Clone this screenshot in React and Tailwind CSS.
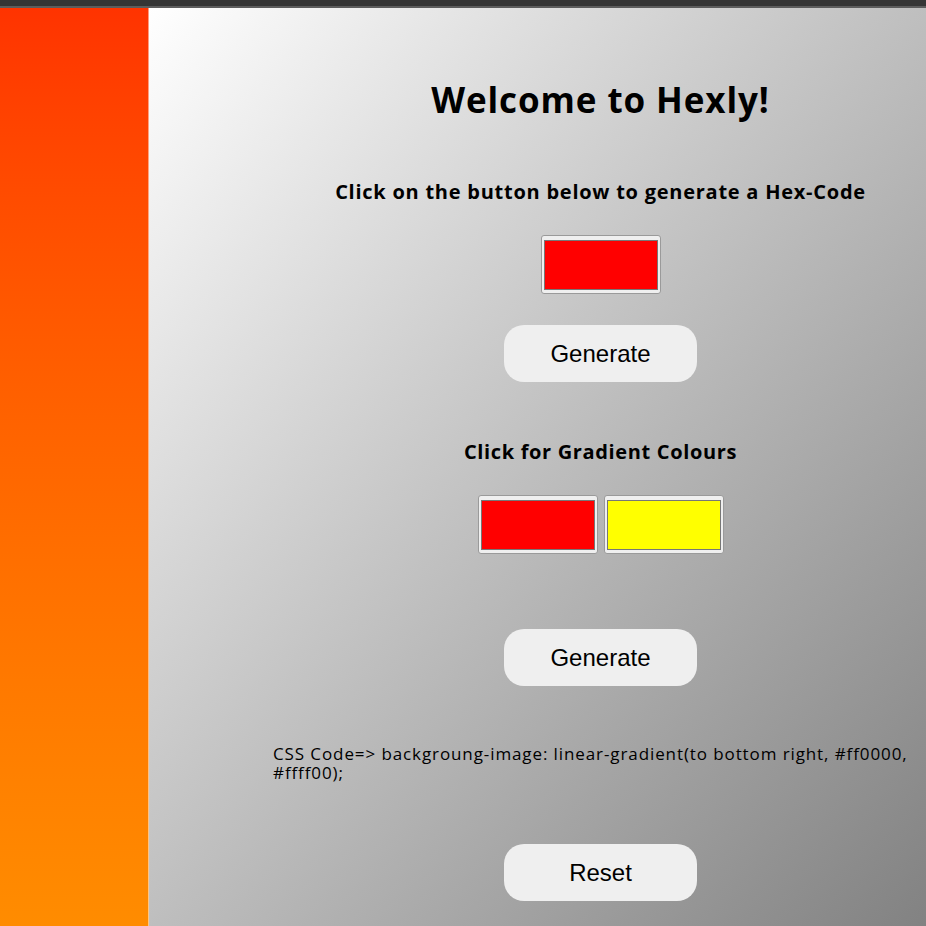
export default function App() {
  const Btn = ({ children }) => (
    <button className="w-[193px] h-[57px] rounded-[20px] bg-[#efefef] text-[24px] text-black font-['Liberation_Sans',Arial,sans-serif]">
      {children}
    </button>
  );
  const Swatch = ({ color }) => (
    <div className="w-[120px] h-[59px] border border-[#9a9a9a] rounded-[3px] bg-[#efefef] pt-[4px] pb-[3px] px-[2px] flex">
      <div className="flex-1 border border-[#777777]" style={{ background: color }} />
    </div>
  );
  return (
    <div className="w-[926px] h-[926px] overflow-hidden flex flex-col">
      <div className="h-[6px] bg-[#353535]" />
      <div className="h-[2px] bg-[#5d5d5d]" />
      <div className="flex flex-1">
        <div className="w-[149px] bg-gradient-to-b from-[#ff3300] to-[#ff8c00] border-r border-white/50" />
        <div className="flex-1 bg-gradient-to-br from-white to-[#828282] pl-[124px] font-['Open_Sans','Noto_Sans',sans-serif] text-black">
          <div className="flex flex-col items-center text-center pl-[2px]">
            <h1 className="mt-[72px] text-[35px] leading-[40px] font-bold tracking-[0.9px]">Welcome to Hexly!</h1>
            <p className="mt-[59px] text-[20px] leading-[26px] font-bold tracking-[0.75px]">Click on the button below to generate a Hex-Code</p>
            <div className="mt-[30px]"><Swatch color="#ff0000" /></div>
            <div className="mt-[31px]"><Btn>Generate</Btn></div>
            <p className="mt-[57px] text-[20px] leading-[26px] font-bold tracking-[0.65px]">Click for Gradient Colours</p>
            <div className="mt-[30px] flex gap-[6px]">
              <Swatch color="#ff0000" />
              <Swatch color="#ffff00" />
            </div>
            <div className="mt-[75px]"><Btn>Generate</Btn></div>
          </div>
          <p className="mt-[58px] text-[17px] leading-[19px] text-left pr-[10px] tracking-[0.9px]">
            CSS Code=&gt; backgroung-image: linear-gradient(to bottom right, #ff0000, #ffff00);
          </p>
          <div className="mt-[62px] flex justify-center pl-[2px]"><Btn>Reset</Btn></div>
        </div>
      </div>
    </div>
  );
}
